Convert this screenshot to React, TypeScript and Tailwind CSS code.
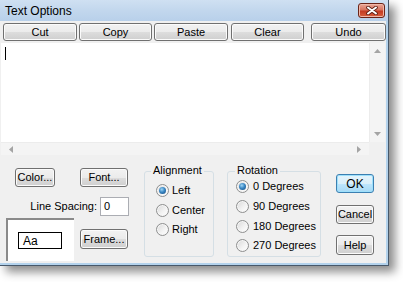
import React from "react";

const btn =
  "flex items-center justify-center border border-[#707070] rounded-[3px] bg-[linear-gradient(#f2f2f2_0%,#ebebeb_50%,#dddddd_51%,#cfcfcf_100%)] shadow-[inset_0_0_0_1px_#fbfbfb] text-[11px] text-black leading-none";

const okBtn =
  "flex items-center justify-center border border-[#3c7fb1] rounded-[3px] bg-[linear-gradient(#e5f4fc_0%,#d9effa_50%,#bee6fd_51%,#a7d9f5_100%)] shadow-[inset_0_0_0_1px_#9ee0fb] text-[11px] text-black leading-none";

function Radio({ checked }: { checked?: boolean }) {
  return (
    <span className="relative flex items-center justify-center w-[13px] h-[13px] rounded-full border border-[#8e8f8f] bg-[linear-gradient(135deg,#d8d8d8_0%,#f4f4f4_60%,#ffffff_100%)] shadow-[inset_0_0_0_1px_#f6f6f6] shrink-0">
      {checked && (
        <span className="w-[7px] h-[7px] rounded-full bg-[radial-gradient(circle_at_40%_35%,#9fd6f5_0%,#3a87c4_45%,#12477a_100%)]" />
      )}
    </span>
  );
}

function RadioRow({ label, checked, gap, h }: { label: string; checked?: boolean; gap: string; h: string }) {
  return (
    <div className={`flex items-center ${h}`}>
      <Radio checked={checked} />
      <span className={`${gap} text-[11px] leading-none text-black`}>{label}</span>
    </div>
  );
}

export default function App() {
  return (
    <div
      className="w-[403px] h-[282px] bg-white overflow-hidden"
      style={{ fontFamily: '"Liberation Sans", Arial, sans-serif' }}
    >
      <div className="w-[389px] h-[266px] flex flex-col bg-[#b3d2ec] border-r border-b border-[#47586a] shadow-[6px_6px_9px_rgba(0,0,0,0.45)]">
        {/* Title bar */}
        <div className="h-[21px] shrink-0 flex items-center bg-[linear-gradient(#cfe0f2_0%,#c2d7ed_50%,#b8d0ea_100%)]">
          <span className="ml-[5px] text-[12px] text-black leading-none mt-[1px]">Text Options</span>
          <div className="ml-auto mr-[3px] w-[27px] h-[15px] rounded-[3px] border border-[#6b2418] bg-[linear-gradient(#eaa899_0%,#d7745f_45%,#c43b22_55%,#d8603f_100%)] shadow-[inset_0_0_0_1px_#f0b7a8] flex items-center justify-center">
            <svg width="12" height="9" viewBox="0 0 12 9">
              <path d="M2 1.5 L10 7.5 M10 1.5 L2 7.5" stroke="#5b1c12" strokeWidth="3.6" strokeLinecap="round" />
              <path d="M2 1.5 L10 7.5 M10 1.5 L2 7.5" stroke="#ffffff" strokeWidth="2" strokeLinecap="round" />
            </svg>
          </div>
        </div>

        {/* Body */}
        <div className="flex-1 flex flex-col bg-[#f0f0f0] mr-[2px] mb-[2px]">
          {/* Command buttons */}
          <div className="flex mt-[2px] ml-[3px] h-[18px]">
            <div className={`${btn} w-[74px]`}>Cut</div>
            <div className={`${btn} w-[73px] ml-[2px]`}>Copy</div>
            <div className={`${btn} w-[74px] ml-[2px]`}>Paste</div>
            <div className={`${btn} w-[73px] ml-[3px]`}>Clear</div>
            <div className={`${btn} w-[75px] ml-[7px]`}>Undo</div>
          </div>

          {/* Edit area */}
          <div className="mt-[2px] ml-[1px] w-[384px] h-[112px] flex flex-col">
            <div className="flex h-[99px]">
              <div className="flex-1 bg-white">
                <div className="ml-[4px] mt-[4px] w-[1px] h-[13px] bg-black" />
              </div>
              <div className="w-[16px] bg-[#f4f4f4] border-l border-[#ececec] flex flex-col items-center justify-between py-[6px]">
                <svg width="7" height="4" viewBox="0 0 7 4">
                  <path d="M0 4 L3.5 0 L7 4 Z" fill="#a4a4a4" />
                </svg>
                <svg width="7" height="4" viewBox="0 0 7 4">
                  <path d="M0 0 L3.5 4 L7 0 Z" fill="#a4a4a4" />
                </svg>
              </div>
            </div>
            <div className="flex h-[13px]">
              <div className="flex-1 bg-[#f4f4f4] border-t border-[#ececec] flex items-center justify-between px-[8px]">
                <svg width="4" height="7" viewBox="0 0 4 7">
                  <path d="M4 0 L0 3.5 L4 7 Z" fill="#a4a4a4" />
                </svg>
                <svg width="4" height="7" viewBox="0 0 4 7">
                  <path d="M0 0 L4 3.5 L0 7 Z" fill="#a4a4a4" />
                </svg>
              </div>
              <div className="w-[16px] bg-[#f0f0f0]" />
            </div>
          </div>

          {/* Lower panel */}
          <div className="flex flex-1">
            {/* Column 1 */}
            <div className="w-[130px] flex flex-col">
              <div className="flex mt-[13px] ml-[15px]">
                <div className={`${btn} w-[40px] h-[19px]`}>Color...</div>
                <div className={`${btn} w-[48px] h-[19px] ml-[25px]`}>Font...</div>
              </div>
              <div className="flex items-center justify-end w-[129px] mt-[10px]">
                <span className="text-[11px] leading-none text-black mr-[3px]">Line Spacing:</span>
                <div className="w-[29px] h-[19px] bg-white border border-[#abadb3] flex items-center pl-[3px] text-[11px] leading-none text-black">
                  0
                </div>
              </div>
              <div className="flex mt-[2px]">
                <div className="ml-[6px] w-[68px] h-[43px] bg-white border-l-2 border-t-2 border-[#8a8a8a] flex items-start">
                  <div className="ml-[10px] mt-[12px] w-[44px] h-[17px] border border-black flex items-center pl-[4px] text-[12px] leading-none text-black">
                    Aa
                  </div>
                </div>
                <div className={`${btn} w-[48px] h-[20px] ml-[6px] mt-[11px]`}>Frame...</div>
              </div>
            </div>

            {/* Alignment group */}
            <div className="relative ml-[14px] mt-[16px] w-[70px] h-[86px] border border-[#d5dfe5] rounded-[3px] pl-[11px] pt-[9px] flex flex-col">
              <span className="absolute left-[6px] top-[-7px] px-[2px] bg-[#f0f0f0] text-[11px] leading-none text-black">
                Alignment
              </span>
              <RadioRow label="Left" checked gap="ml-[3px]" h="h-[19.5px]" />
              <RadioRow label="Center" gap="ml-[3px]" h="h-[19.5px]" />
              <RadioRow label="Right" gap="ml-[3px]" h="h-[19.5px]" />
            </div>

            {/* Rotation group */}
            <div className="relative ml-[13px] mt-[16px] w-[94px] h-[86px] border border-[#d5dfe5] rounded-[3px] pl-[8px] pt-[5px] flex flex-col">
              <span className="absolute left-[7px] top-[-7px] px-[2px] bg-[#f0f0f0] text-[11px] leading-none text-black">
                Rotation
              </span>
              <RadioRow label="0 Degrees" checked gap="ml-[4px]" h="h-[19.7px]" />
              <RadioRow label="90 Degrees" gap="ml-[4px]" h="h-[19.7px]" />
              <RadioRow label="180 Degrees" gap="ml-[4px]" h="h-[19.7px]" />
              <RadioRow label="270 Degrees" gap="ml-[4px]" h="h-[19.7px]" />
            </div>

            {/* Dialog buttons */}
            <div className="ml-[15px] w-[38px] flex flex-col">
              <div className={`${okBtn} h-[19px] mt-[19px] text-[12px]`}>OK</div>
              <div className={`${btn} h-[19px] mt-[12px]`}>Cancel</div>
              <div className={`${btn} h-[20px] mt-[11px]`}>Help</div>
            </div>
          </div>
        </div>
      </div>
    </div>
  );
}
